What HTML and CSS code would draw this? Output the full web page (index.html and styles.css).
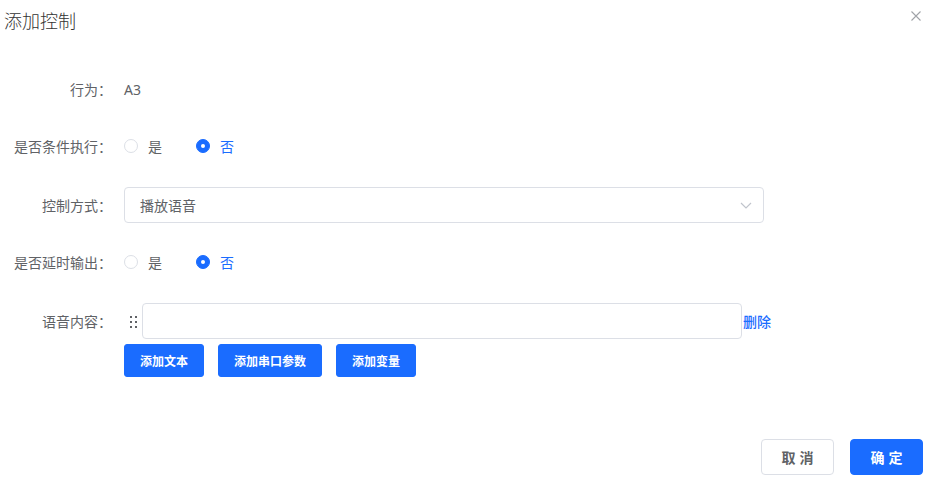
FILE: index.html
```html
<!DOCTYPE html>
<html lang="zh">
<head>
<meta charset="utf-8">
<title>添加控制</title>
<link rel="stylesheet" href="styles.css">
</head>
<body>
<div class="dialog">
  <div class="header">
    <span class="title">添加控制</span>
    <button class="close" aria-label="关闭">
      <svg width="10" height="10" viewBox="0 0 10 10"><path d="M0.5 0.5L9.5 9.5M9.5 0.5L0.5 9.5" stroke="#a0a3a8" stroke-width="1.1" fill="none"/></svg>
    </button>
  </div>
  <div class="body">
    <div class="item">
      <label class="label">行为：</label>
      <div class="content"><span class="value">A3</span></div>
    </div>
    <div class="item">
      <label class="label">是否条件执行：</label>
      <div class="content">
        <span class="radio"><span class="circle"></span><span class="rtext">是</span></span>
        <span class="radio checked"><span class="circle"></span><span class="rtext">否</span></span>
      </div>
    </div>
    <div class="item">
      <label class="label">控制方式：</label>
      <div class="content">
        <div class="select">
          <span>播放语音</span>
          <svg class="arrow" width="12" height="7" viewBox="0 0 12 7"><path d="M1 1L6 6L11 1" stroke="#c0c4cc" stroke-width="1.2" fill="none"/></svg>
        </div>
      </div>
    </div>
    <div class="item">
      <label class="label">是否延时输出：</label>
      <div class="content">
        <span class="radio"><span class="circle"></span><span class="rtext">是</span></span>
        <span class="radio checked"><span class="circle"></span><span class="rtext">否</span></span>
      </div>
    </div>
    <div class="item voice">
      <label class="label">语音内容：</label>
      <div class="content col">
        <div class="line">
          <span class="drag">
            <svg width="8" height="14" viewBox="0 0 8 14"><g fill="#606266"><rect x="0" y="0" width="2" height="2"/><rect x="5" y="0" width="2" height="2"/><rect x="0" y="5" width="2" height="2"/><rect x="5" y="5" width="2" height="2"/><rect x="0" y="10" width="2" height="2"/><rect x="5" y="10" width="2" height="2"/></g></svg>
          </span>
          <input class="input" type="text">
          <a class="del">删除</a>
        </div>
        <div class="btns">
          <button class="btn small w80">添加文本</button>
          <button class="btn small w104">添加串口参数</button>
          <button class="btn small w80">添加变量</button>
        </div>
      </div>
    </div>
  </div>
  <div class="footer">
    <button class="btn plain">取消</button>
    <button class="btn primary">确定</button>
  </div>
</div>
</body>
</html>
```

FILE: styles.css
```css
* { box-sizing: border-box; }
html, body { margin: 0; padding: 0; background: #fff; }
body {
  font-family: "Noto Sans CJK SC", "Noto Sans", "Liberation Sans", sans-serif;
  color: #606266;
  font-size: 14px;
}
.dialog {
  width: 934px;
  height: 485px;
  position: relative;
  display: flex;
  flex-direction: column;
}
.header {
  height: 40px;
  padding-left: 4px;
  display: flex;
  align-items: center;
}
.title {
  font-size: 18px;
  color: #333;
  line-height: 24px;
  font-weight: 300;
}
.close {
  position: absolute;
  top: 11px;
  left: 911px;
  width: 10px;
  height: 10px;
  padding: 0;
  border: 0;
  background: none;
  display: flex;
}
.body {
  padding-top: 31px;
}
.item {
  display: flex;
  align-items: flex-start;
  margin-bottom: 21px;
}
.item:nth-child(2), .item:nth-child(4) { margin-bottom: 23px; }
.label {
  width: 112px;
  margin-right: 12px;
  text-align: right;
  line-height: 36px;
  height: 36px;
  color: #606266;
  white-space: nowrap;
}
.content {
  display: flex;
  align-items: center;
  min-height: 36px;
}
.content.col {
  flex-direction: column;
  align-items: flex-start;
}
.value { color: #606266; font-family: "Noto Sans", "Liberation Sans", sans-serif; }
.radio {
  display: inline-flex;
  align-items: center;
  margin-right: 34px;
  color: #606266;
}
.circle {
  width: 14px;
  height: 14px;
  border-radius: 50%;
  border: 1px solid #dcdfe6;
  background: #fff;
  margin-right: 10px;
  position: relative;
}
.radio.checked .circle {
  background: #1a6cff;
  border-color: #1a6cff;
}
.radio.checked .circle::after {
  content: "";
  position: absolute;
  width: 4px;
  height: 4px;
  border-radius: 50%;
  background: #fff;
  left: 4px;
  top: 4px;
}
.radio.checked .rtext { color: #1a6cff; }
.select {
  width: 640px;
  height: 36px;
  border: 1px solid #dcdfe6;
  border-radius: 4px;
  display: flex;
  align-items: center;
  justify-content: space-between;
  padding: 0 11px 0 15px;
  color: #606266;
}
.line {
  display: flex;
  align-items: center;
  height: 36px;
}
.drag {
  width: 18px;
  display: flex;
  justify-content: center;
  padding-left: 1px;
  margin-top: 4px;
}
.input {
  width: 600px;
  height: 36px;
  border: 1px solid #dcdfe6;
  border-radius: 4px;
  outline: none;
  margin: 0;
  padding: 0 15px;
  font: inherit;
}
.del {
  margin-left: 1px;
  color: #1a6cff;
  font-size: 14px;
  font-weight: 500;
  cursor: pointer;
}
.btns {
  display: flex;
  margin-top: 5px;
  gap: 14px;
}
.btn {
  font-family: "Noto Sans CJK SC", sans-serif;
  border-radius: 3px;
  border: 1px solid #1a6cff;
  background: #1a6cff;
  color: #fff;
  font-weight: 700;
  padding: 0;
  cursor: pointer;
}
.btn.small {
  height: 33px;
  font-size: 12px;
}
.w80 { width: 80px; }
.w104 { width: 104px; }
.footer {
  margin-top: auto;
  display: flex;
  justify-content: flex-end;
  gap: 16px;
  padding: 0 11px 10px 0;
}
.footer .btn {
  width: 73px;
  height: 36px;
  font-size: 14px;
  border-radius: 4px;
  letter-spacing: 4px;
  text-indent: 4px;
}
.btn.plain {
  background: #fff;
  border-color: #dcdfe6;
  color: #606266;
}
```
